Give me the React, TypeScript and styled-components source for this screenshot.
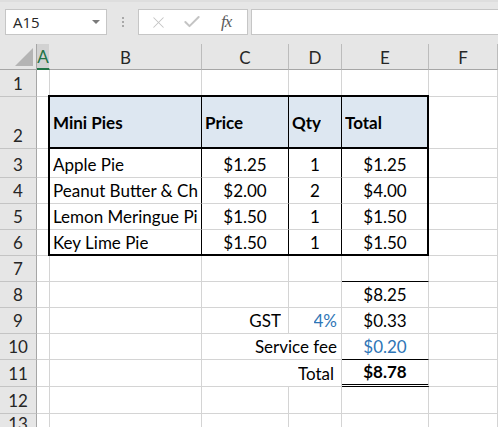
import styled, { createGlobalStyle } from 'styled-components'
import { X, Check } from 'lucide-react'

const GlobalStyle = createGlobalStyle`
  html, body {
    margin: 0;
    padding: 0;
    background: #fff;
  }
  body {
    font-family: Lato, 'Liberation Sans', sans-serif;
    overflow: hidden;
  }
`

type Align = 'left' | 'center' | 'right'
type Line = 'grid' | 'black' | 'double'

interface CellData {
  col: number
  text?: string
  align?: Align
  bold?: boolean
  blue?: boolean
  fill?: boolean
  right?: Line
  bottom?: Line
  span?: number
  pad?: number
  middle?: boolean
}

const COLUMNS = ['A', 'B', 'C', 'D', 'E', 'F']

// col: 0 = A ... 5 = F
const ROWS: CellData[][] = [
  [],
  [
    { col: 1, text: 'Mini Pies', bold: true, fill: true, right: 'black', middle: true },
    { col: 2, text: 'Price', bold: true, fill: true, right: 'black', middle: true },
    { col: 3, text: 'Qty', bold: true, fill: true, right: 'black', middle: true },
    { col: 4, text: 'Total', bold: true, fill: true, middle: true },
  ],
  [
    { col: 1, text: 'Apple Pie', right: 'black' },
    { col: 2, text: '$1.25', align: 'center', right: 'black' },
    { col: 3, text: '1', align: 'center', right: 'black' },
    { col: 4, text: '$1.25', align: 'center' },
  ],
  [
    { col: 1, text: 'Peanut Butter & Chocolate Pie', right: 'black' },
    { col: 2, text: '$2.00', align: 'center', right: 'black' },
    { col: 3, text: '2', align: 'center', right: 'black' },
    { col: 4, text: '$4.00', align: 'center' },
  ],
  [
    { col: 1, text: 'Lemon Meringue Pie', right: 'black' },
    { col: 2, text: '$1.50', align: 'center', right: 'black' },
    { col: 3, text: '1', align: 'center', right: 'black' },
    { col: 4, text: '$1.50', align: 'center' },
  ],
  [
    { col: 1, text: 'Key Lime Pie', right: 'black' },
    { col: 2, text: '$1.50', align: 'center', right: 'black' },
    { col: 3, text: '1', align: 'center', right: 'black' },
    { col: 4, text: '$1.50', align: 'center' },
  ],
  [{ col: 4, bottom: 'black' }],
  [{ col: 4, text: '$8.25', align: 'center' }],
  [
    { col: 2, text: 'GST', align: 'right', pad: 7 },
    { col: 3, text: '4%', align: 'right', blue: true, pad: 4 },
    { col: 4, text: '$0.33', align: 'center' },
  ],
  [
    { col: 2, span: 2, text: 'Service fee', align: 'right', pad: 4 },
    { col: 4, text: '$0.20', align: 'center', blue: true, bottom: 'black' },
  ],
  [
    { col: 2, span: 2, text: 'Total', align: 'right', pad: 7 },
    { col: 4, text: '$8.78', align: 'center', bold: true, bottom: 'double' },
  ],
  [],
  [],
]

function buildRow(cells: CellData[]): CellData[] {
  const out: CellData[] = []
  let c = 0
  while (c < COLUMNS.length) {
    const found = cells.find((x) => x.col === c)
    if (found) {
      out.push(found)
      c += found.span ?? 1
    } else {
      out.push({ col: c })
      c += 1
    }
  }
  return out
}

export default function App() {
  return (
    <>
      <GlobalStyle />
      <Toolbar>
        <NameBox>
          <span>A15</span>
          <Caret />
        </NameBox>
        <Grip>
          <i />
          <i />
          <i />
        </Grip>
        <FormulaButtons>
          <X size={19} strokeWidth={1.3} />
          <Check size={20} strokeWidth={2.4} />
          <Fx>fx</Fx>
        </FormulaButtons>
        <FormulaInput />
      </Toolbar>

      <Sheet>
        <Corner $row={1} $col={1}>
          <svg width="18" height="18" viewBox="0 0 18 18">
            <polygon points="18,0 18,18 0,18" fill="#b4b4b4" />
          </svg>
        </Corner>
        {COLUMNS.map((letter, i) => (
          <ColHead key={letter} $row={1} $col={i + 2} $active={i === 0}>
            {letter}
          </ColHead>
        ))}

        {ROWS.map((cells, r) => (
          <RowGroup key={r} row={r + 2} num={r + 1} cells={buildRow(cells)} />
        ))}

        <TableOutline />
        <HeaderRule />
      </Sheet>
    </>
  )
}

function RowGroup({ row, num, cells }: { row: number; num: number; cells: CellData[] }) {
  return (
    <>
      <RowHead $row={row} $col={1}>
        {num}
      </RowHead>
      {cells.map((cell) => (
        <Cell
          key={cell.col}
          $row={row}
          $col={cell.col + 2}
          $span={cell.span ?? 1}
          $align={cell.align ?? 'left'}
          $bold={!!cell.bold}
          $blue={!!cell.blue}
          $fill={!!cell.fill}
          $right={cell.right ?? 'grid'}
          $bottom={cell.bottom ?? 'grid'}
          $pad={cell.pad ?? 3}
          $middle={!!cell.middle}
        >
          {cell.text && <CellText>{cell.text}</CellText>}
        </Cell>
      ))}
    </>
  )
}

const Toolbar = styled.div`
  height: 44px;
  box-sizing: border-box;
  background: #e6e6e6;
  border-top: 2px solid #dedede;
  display: flex;
  align-items: flex-start;
  padding: 7px 0 0 5px;
  font-family: 'Open Sans', 'Noto Sans', sans-serif;
`

const NameBox = styled.div`
  width: 102px;
  height: 26px;
  box-sizing: border-box;
  background: #fff;
  border: 1px solid #c6c6c6;
  display: flex;
  align-items: center;
  justify-content: space-between;
  padding: 0 6px 0 7px;
  font-size: 15px;
  color: #262626;
`

const Caret = styled.span`
  width: 0;
  height: 0;
  border-left: 4px solid transparent;
  border-right: 4px solid transparent;
  border-top: 4px solid #7a7a7a;
`

const Grip = styled.div`
  width: 31px;
  height: 26px;
  display: flex;
  flex-direction: column;
  align-items: center;
  justify-content: center;
  gap: 2px;

  i {
    width: 2px;
    height: 2px;
    background: #a8a8a8;
  }
`

const FormulaButtons = styled.div`
  width: 110px;
  height: 26px;
  box-sizing: border-box;
  background: #fff;
  border: 1px solid #c6c6c6;
  display: flex;
  align-items: center;
  padding: 0 0 0 10px;
  gap: 14px;
  color: #c4c4c4;
`

const Fx = styled.span`
  font-family: 'Liberation Serif', 'DejaVu Serif', serif;
  font-style: italic;
  font-size: 17px;
  color: #5a5a5a;
  margin-left: 5px;
  letter-spacing: -1px;
`

const FormulaInput = styled.div`
  flex: 1;
  margin-left: 3px;
  height: 26px;
  box-sizing: border-box;
  background: #fff;
  border: 1px solid #c6c6c6;
  border-right: none;
`

const Sheet = styled.div`
  display: grid;
  grid-template-columns: 37px 13px 152px 87px 53px 87px 1fr;
  grid-template-rows: 26px 27px 52px 29px 26px 26px 26px 26px 26px 26px 26px 27px 27px 1fr;
  height: calc(100vh - 44px);
  overflow: hidden;
`

interface Placed {
  $row: number
  $col: number
}

const Corner = styled.div<Placed>`
  grid-row: ${(p) => p.$row};
  grid-column: ${(p) => p.$col};
  background: #e6e6e6;
  border-right: 1px solid #a6a6a6;
  border-bottom: 1px solid #a6a6a6;
  display: flex;
  align-items: flex-end;
  justify-content: flex-end;
  padding: 0 3px 3px 0;
`

const ColHead = styled.div<Placed & { $active: boolean }>`
  grid-row: ${(p) => p.$row};
  grid-column: ${(p) => p.$col};
  background: ${(p) => (p.$active ? '#d2d2d2' : '#e6e6e6')};
  border-right: 1px solid ${(p) => (p.$active ? '#e6e6e6' : '#bcbcbc')};
  border-bottom: ${(p) => (p.$active ? '2px solid #217346' : '1px solid #a6a6a6')};
  color: ${(p) => (p.$active ? '#217346' : '#262626')};
  display: flex;
  align-items: center;
  justify-content: center;
  font-size: 17px;
  padding-top: 1px;
`

const RowHead = styled.div<Placed>`
  grid-row: ${(p) => p.$row};
  grid-column: ${(p) => p.$col};
  background: #e6e6e6;
  border-right: 1px solid #a6a6a6;
  border-bottom: 1px solid #c4c4c4;
  display: flex;
  align-items: flex-end;
  justify-content: center;
  padding-bottom: 2px;
  font-size: 17px;
  line-height: 20px;
  color: #262626;
`

const lineColor = (l: Line) => (l === 'grid' ? '#d4d4d4' : '#000')

const Cell = styled.div<
  Placed & {
    $span: number
    $align: Align
    $bold: boolean
    $blue: boolean
    $fill: boolean
    $right: Line
    $bottom: Line
    $pad: number
    $middle: boolean
  }
>`
  grid-row: ${(p) => p.$row};
  grid-column: ${(p) => p.$col} / span ${(p) => p.$span};
  min-width: 0;
  overflow: hidden;
  background: ${(p) => (p.$fill ? '#dde7f1' : '#fff')};
  border-right: 1px solid ${(p) => lineColor(p.$right)};
  border-bottom: ${(p) => (p.$bottom === 'double' ? '3px double #000' : `1px solid ${lineColor(p.$bottom)}`)};
  display: flex;
  align-items: ${(p) => (p.$middle ? 'center' : 'flex-end')};
  justify-content: ${(p) =>
    p.$align === 'left' ? 'flex-start' : p.$align === 'right' ? 'flex-end' : 'center'};
  padding: ${(p) => (p.$middle ? '0' : '0 0 2px 0')};
  padding-left: 3px;
  padding-right: ${(p) => p.$pad}px;
  font-size: 17px;
  line-height: 20px;
  font-weight: ${(p) => (p.$bold ? 700 : 400)};
  color: ${(p) => (p.$blue ? '#2e75b6' : '#000')};
`

const CellText = styled.span`
  white-space: nowrap;
  max-width: 100%;
  overflow: hidden;
  text-overflow: clip;
`

const TableOutline = styled.div`
  grid-row: 3 / 8;
  grid-column: 3 / 7;
  margin: -2px 0 0 -2px;
  border: 2px solid #000;
  pointer-events: none;
  z-index: 1;
`

const HeaderRule = styled.div`
  grid-row: 3;
  grid-column: 3 / 7;
  border-bottom: 2px solid #000;
  pointer-events: none;
  z-index: 1;
`
